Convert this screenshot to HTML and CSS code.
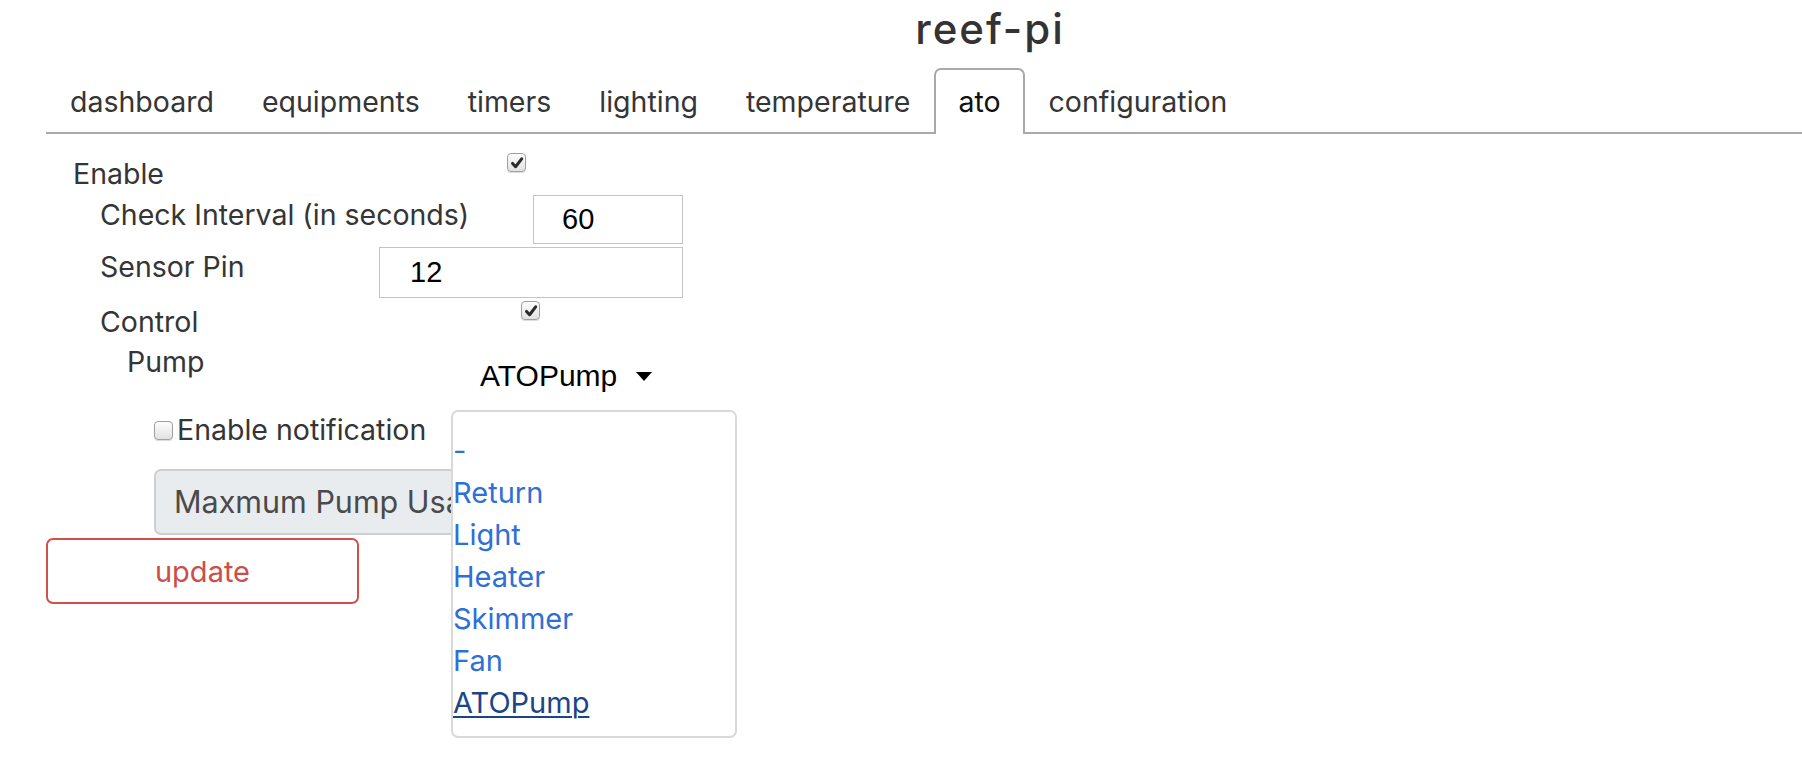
FILE: index.html
```html
<!DOCTYPE html>
<html lang="en">
<head>
<meta charset="utf-8">
<title>reef-pi</title>
<link rel="stylesheet" href="styles.css">
</head>
<body>
<div class="page">
  <header class="header"><h1 class="title">reef-pi</h1></header>
  <nav class="tabs">
    <a class="tab">dashboard</a>
    <a class="tab">equipments</a>
    <a class="tab">timers</a>
    <a class="tab">lighting</a>
    <a class="tab">temperature</a>
    <a class="tab active">ato</a>
    <a class="tab">configuration</a>
  </nav>
  <div class="content">
    <div class="form">
      <div class="row row-enable">
        <span class="label lbl-enable">Enable</span>
        <span class="check checked chk-enable"><svg viewBox="0 0 12 12" width="14" height="14"><path d="M2.2 6.4 L4.8 9.2 L10 2.4" fill="none" stroke="#2b2b2b" stroke-width="2.6" stroke-linecap="round" stroke-linejoin="round"/></svg></span>
      </div>
      <div class="row row-sub">
        <span class="label lbl-interval">Check Interval (in seconds)</span>
        <input class="field field-interval" type="text" value="60">
      </div>
      <div class="row row-sub">
        <span class="label lbl-pin">Sensor Pin</span>
        <input class="field field-pin" type="text" value="12">
      </div>
      <div class="row row-sub">
        <span class="label lbl-control">Control</span>
        <span class="check checked chk-control"><svg viewBox="0 0 12 12" width="14" height="14"><path d="M2.2 6.4 L4.8 9.2 L10 2.4" fill="none" stroke="#2b2b2b" stroke-width="2.6" stroke-linecap="round" stroke-linejoin="round"/></svg></span>
      </div>
      <div class="row row-pump">
        <span class="label lbl-pump">Pump</span>
        <div class="dropdown">
          <button class="toggle" type="button">ATOPump<span class="caret"></span></button>
          <div class="menu">
            <a class="item">-</a>
            <a class="item">Return</a>
            <a class="item">Light</a>
            <a class="item">Heater</a>
            <a class="item">Skimmer</a>
            <a class="item">Fan</a>
            <a class="item current">ATOPump</a>
          </div>
        </div>
      </div>
      <div class="row row-notify">
        <span class="check chk-notify"></span>
        <span class="label lbl-notify">Enable notification</span>
      </div>
      <div class="row row-usage">
        <div class="usage">Maxmum Pump Usage</div>
      </div>
    </div>
    <button class="update" type="button">update</button>
  </div>
</div>
</body>
</html>
```

FILE: styles.css
```css
html, body {
  margin: 0;
  padding: 0;
  background: #ffffff;
}

body {
  font-family: Inter, "Noto Sans", sans-serif;
  color: #353535;
}

.page {
  width: 1802px;
  height: 770px;
  overflow: hidden;
}

.header {
  display: flex;
  justify-content: center;
  padding-left: 178px;
  height: 68px;
}

.title {
  margin: 0;
  padding-top: 4px;
  font-size: 42px;
  line-height: 50px;
  font-weight: 500;
  letter-spacing: 2px;
  color: #333333;
}

.tabs {
  display: flex;
  margin-left: 46px;
  border-bottom: 2px solid #a9a9a9;
}

.tab {
  display: block;
  padding: 14px 22px 14px;
  font-size: 28.5px;
  line-height: 36px;
  color: #353535;
  border: 2px solid transparent;
  border-bottom: 0;
  border-radius: 7px 7px 0 0;
  margin-bottom: -2px;
}

.tab.active {
  border-color: #a9a9a9;
  background: #ffffff;
  color: #111111;
}

.content {
  padding-left: 46px;
}

.form {
  padding-left: 27px;
}

.row {
  display: flex;
  align-items: flex-start;
}

.label {
  font-size: 28.5px;
  line-height: 36px;
  color: #353535;
  white-space: nowrap;
}

.check {
  display: flex;
  align-items: center;
  justify-content: center;
  box-sizing: border-box;
  width: 19px;
  height: 19px;
  border: 1px solid #a0a0a0;
  border-radius: 4px;
  background: linear-gradient(#fdfdfd, #e2e2e2);
  box-shadow: 0 1px 1px rgba(0, 0, 0, 0.15);
  flex: none;
}

.lbl-enable {
  width: 434px;
  margin-top: 22px;
}

.chk-enable {
  margin-top: 19px;
}

.row-sub {
  padding-left: 27px;
}

.lbl-interval {
  width: 433px;
  margin-top: 5px;
}

.field {
  box-sizing: border-box;
  margin: 3px 0 0;
  border: 1px solid #c4c4c4;
  border-radius: 0;
  padding: 0 0 0 28px;
  font-family: "Liberation Sans", Arial, sans-serif;
  font-size: 29px;
  color: #000000;
  background: #ffffff;
  outline: none;
}

.field-interval {
  width: 150px;
  height: 49px;
}

.lbl-pin {
  width: 279px;
  margin-top: 5px;
}

.field-pin {
  width: 304px;
  height: 51px;
  padding-left: 30px;
}

.lbl-control {
  width: 421px;
  margin-top: 6px;
}

.chk-control {
  margin-top: 3px;
}

.row-pump {
  padding-left: 54px;
}

.lbl-pump {
  width: 353px;
  margin-top: 4px;
}

.dropdown {
  position: relative;
  margin-top: 18px;
}

.toggle {
  display: flex;
  align-items: center;
  margin: 0;
  padding: 0;
  border: 0;
  background: transparent;
  font-family: "Liberation Sans", Arial, sans-serif;
  font-size: 30px;
  line-height: 36px;
  color: #000000;
}

.caret {
  display: block;
  margin-left: 19px;
  width: 0;
  height: 0;
  border-top: 9px solid #000000;
  border-left: 8px solid transparent;
  border-right: 8px solid transparent;
}

.menu {
  position: absolute;
  z-index: 10;
  top: 52px;
  left: -29px;
  box-sizing: border-box;
  width: 286px;
  height: 328px;
  padding: 18px 0 12px;
  border: 2px solid #d9d9d9;
  border-radius: 7px;
  background: #ffffff;
  display: flex;
  flex-direction: column;
}

.item {
  display: block;
  font-size: 29px;
  line-height: 42px;
  color: #2f6fd6;
  white-space: nowrap;
}

.item.current {
  color: #1c4588;
  text-decoration: underline;
  text-decoration-thickness: 2px;
  text-underline-offset: 3px;
}

.row-notify {
  padding-left: 81px;
}

.chk-notify {
  margin-top: 27px;
}

.lbl-notify {
  margin-top: 18px;
  margin-left: 4px;
}

.row-usage {
  padding-left: 81px;
}

.usage {
  box-sizing: border-box;
  margin-top: 21px;
  width: 430px;
  height: 66px;
  padding-left: 18px;
  border: 2px solid #cfcfcf;
  border-radius: 7px;
  background: #e9ecef;
  font-size: 30.5px;
  line-height: 62px;
  color: #4a4a4a;
  white-space: nowrap;
  overflow: hidden;
}

.update {
  display: block;
  box-sizing: border-box;
  margin: 3px 0 0;
  width: 313px;
  height: 66px;
  border: 2px solid #d0504b;
  border-radius: 7px;
  background: #ffffff;
  font-family: Inter, "Noto Sans", sans-serif;
  font-size: 29px;
  color: #cc4e49;
}
```
